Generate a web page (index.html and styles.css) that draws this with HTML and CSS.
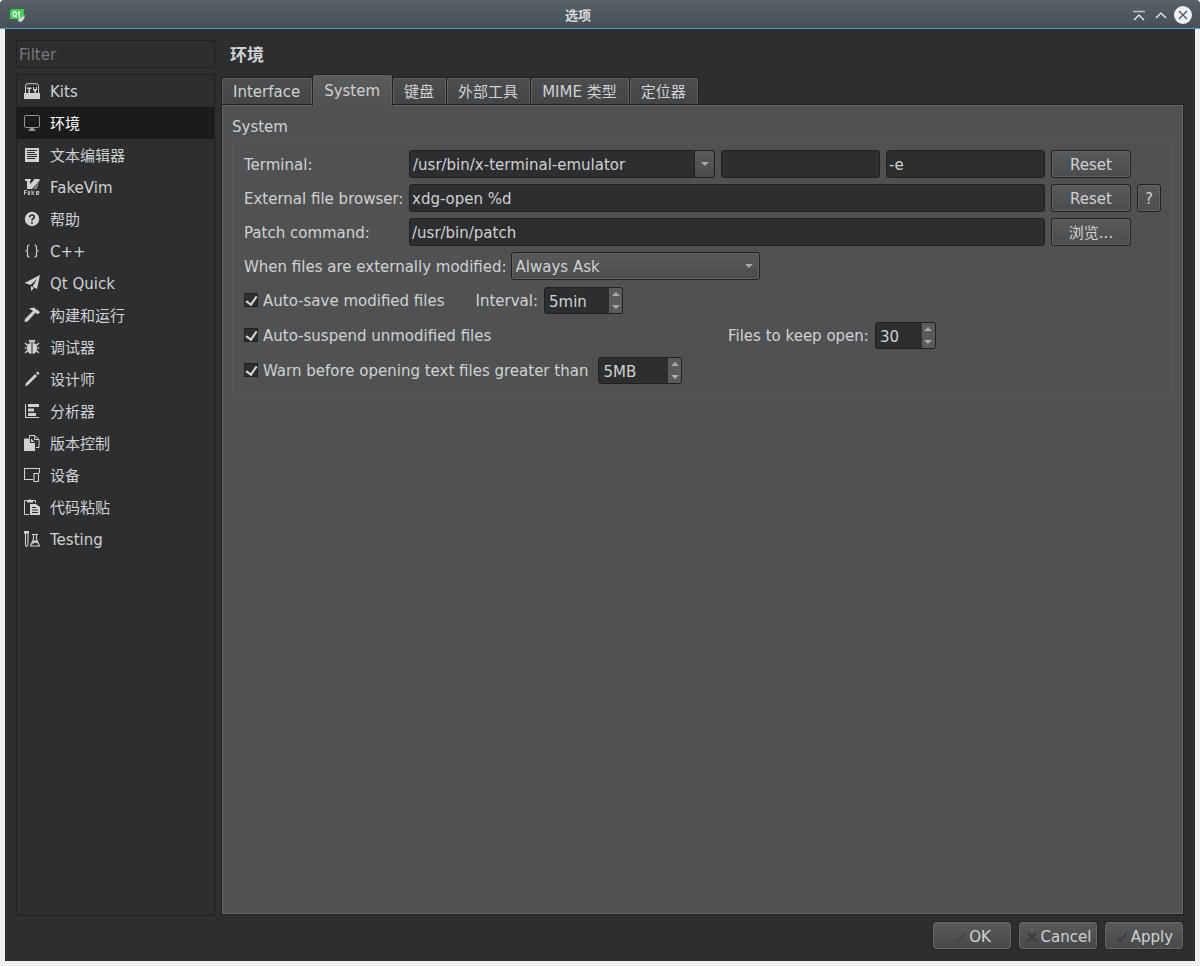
FILE: index.html
```html
<!DOCTYPE html>
<html lang="zh-CN">
<head>
<meta charset="utf-8">
<title>选项</title>
<link rel="stylesheet" href="styles.css">
</head>
<body>
<div class="window">
  <header class="titlebar">
    <svg class="app-icon" viewBox="0 0 16 16" aria-hidden="true">
      <path d="M2 2h12v8l-2 2H0V4z" fill="#41cd52"/>
      <ellipse cx="4.6" cy="7" rx="1.7" ry="2.4" fill="none" stroke="#fff" stroke-width="1.1"/>
      <path d="M5 8.5l1.5 1.5M9 4v4.5q0 1 1.2 .8M7.7 5.6h2.6" fill="none" stroke="#fff" stroke-width="1.1"/>
      <path d="M8 14l1-4 2 1 4-3-1 4-3 3z" fill="#d8dcd8"/>
    </svg>
    <h1 class="title">选项</h1>
    <div class="window-buttons">
      <button class="window-button" type="button" aria-label="Keep above"><svg viewBox="0 0 18 18"><path d="M3 5.5h12" stroke="#b5babe" stroke-width="1.6"/><path d="M4 14l5-5 5 5" fill="none" stroke="#fcfcfc" stroke-width="1.2"/></svg></button>
      <button class="window-button" type="button" aria-label="Maximize"><svg viewBox="0 0 18 18"><path d="M4 12l5-5 5 5" fill="none" stroke="#fcfcfc" stroke-width="1.2"/></svg></button>
      <button class="window-button" type="button" aria-label="Close"><svg viewBox="0 0 18 18"><circle cx="9" cy="9" r="9" fill="#eff0f1"/><path d="M5 5l8 8M13 5l-8 8" stroke="#4b5358" stroke-width="1.2"/></svg></button>
    </div>
  </header>

  <main class="dialog">
    <div class="columns">
      <aside class="sidebar">
        <input class="filter" type="text" placeholder="Filter" aria-label="Filter">
        <nav class="categories" aria-label="Categories">
          <button class="category" type="button"><svg class="icon" viewBox="0 0 16 16"><path d="M0 10h16v6H0z"/><path d="M1.500 10V3.200Q1.500.7 4 .7h8q2.500 0 2.500 2.500V10" fill="none" stroke="currentColor"/><path d="M3 4.500h4.500v1.500H3zM4.500 5h1.500v6H4.500zM9 4h1v2h2V4h1v3l-1.200 1v3h-1.500V8L9 7z"/></svg><span>Kits</span></button>
          <button class="category selected" type="button" aria-current="page"><svg class="icon dim" viewBox="0 0 16 16"><rect x=".5" y=".5" width="15" height="12" rx="1.500" fill="none" stroke="currentColor"/><path d="M6 13h4v1.500h1.500V16h-7v-1.500H6z"/></svg><span>环境</span></button>
          <button class="category" type="button"><svg class="icon" viewBox="0 0 16 16"><path fill-rule="evenodd" d="M1 1h14v14H1zM3 3v1h10V3zM3 5v1h8V5zM3 7v1h10V7zM3 9v1h10V9zM3 11v1h8v-1z"/></svg><span>文本编辑器</span></button>
          <button class="category" type="button"><svg class="icon" viewBox="0 0 16 16"><path d="M1 0h6v1.500H6V5l4-4V0h5l1 1-8 9H3V2H1z"/><path d="M15 2l-6 8h4z" opacity=".5"/><path d="M.5 16v-4.500h2.500M.5 13.500h2M4 12.500h1.500V15.500H4v-1.500h1.500M8 11v5M10.500 12.500l-2 1.500 2 1.500M12.500 14H15v-1.500h-2.500v3H15" fill="none" stroke="currentColor" stroke-width=".9"/></svg><span>FakeVim</span></button>
          <button class="category" type="button"><svg class="icon" viewBox="0 0 16 16"><circle cx="8" cy="8" r="7.200"/><path d="M5.800 6.200Q5.800 4 8 4t2.200 2Q10.200 7.200 9 7.800 8 8.400 8 9.700M8 11v1.700" fill="none" class="cut" stroke-width="1.700"/></svg><span>帮助</span></button>
          <button class="category" type="button"><svg class="icon" viewBox="0 0 16 16"><path d="M5.500 2Q3.500 2 3.500 4v2.500Q3.500 8 1.500 8q2 0 2 1.500V12q0 2 2 2M10.500 2q2 0 2 2v2.500q0 1.500 2 1.500-2 0-2 1.500V12q0 2-2 2" fill="none" stroke="currentColor" stroke-width="1.200"/></svg><span>C++</span></button>
          <button class="category" type="button"><svg class="icon" viewBox="0 0 16 16"><path d="M16 0l-3 14-4.500-2.500L13 4 6.500 10 .5 8z"/><path d="M7 11l3 2-3 3z"/></svg><span>Qt Quick</span></button>
          <button class="category" type="button"><svg class="icon" viewBox="0 0 16 16"><path d="M5 1.500L10 .5l3 2.500 1 .2 2 2-2.500 2.300-1.800-2L3.500 14.500.5 15 1 12 9 4z"/></svg><span>构建和运行</span></button>
          <button class="category" type="button"><svg class="icon" viewBox="0 0 16 16"><path d="M5 3.500Q5 1 8 1t3 2.500z"/><path d="M3.500 5l4-1v11Q3.500 14.500 3 10zM12.500 5l-4-1v11q4-.5 4.500-5z"/><path d="M1 4l3 3M15 4l-3 3M.5 9H4M15.500 9H12M1 14l3-3M15 14l-3-3M5 1l1.500 1.500M11 1L9.500 2.500" stroke="currentColor" stroke-width="1.200"/></svg><span>调试器</span></button>
          <button class="category" type="button"><svg class="icon" viewBox="0 0 16 16"><path d="M11 3l2 2-9 9-3 1.500 1-3.500zM12 2l1.500-1.500q1 0 2 2L14 4z"/></svg><span>设计师</span></button>
          <button class="category" type="button"><svg class="icon" viewBox="0 0 16 16"><path d="M1 1h1v13h13v1H1zM4 1h11v3H4zM4 5.500h6v3H4zM4 10h8v3H4z"/></svg><span>分析器</span></button>
          <button class="category" type="button"><svg class="icon" viewBox="0 0 16 16"><path d="M0 3.500h6V8h5v8H0z"/><path d="M7 3.500L10.500 7H7z"/><path d="M5.500 3V.5h5l4.500 4v8h-3M10.500.5v4H15" fill="none" stroke="currentColor"/></svg><span>版本控制</span></button>
          <button class="category" type="button"><svg class="icon" viewBox="0 0 16 16"><path d="M9 12.500H.5v-11h15V6M10 6.500h4.500v8H10z" fill="none" stroke="currentColor" stroke-width="1.100"/></svg><span>设备</span></button>
          <button class="category" type="button"><svg class="icon" viewBox="0 0 16 16"><path d="M5 15.500H.5v-14h11V4" fill="none" stroke="currentColor"/><path d="M3 1h2l1-1 1 1h2v2.500H3z"/><path fill-rule="evenodd" d="M6 5h6l4 3v8H6zM8 8v1h4V8zM8 10.500v1h6v-1zM8 13v1h6v-1z"/></svg><span>代码粘贴</span></button>
          <button class="category" type="button"><svg class="icon" viewBox="0 0 16 16"><path d="M0 0h5v2.500H0z"/><path d="M1.500 2v11Q1.500 15.500 2.500 15.500t1.500-2.500V2M8 3.500h6M9.500 4v4L6.500 15h9L12.500 8V4" fill="none" stroke="currentColor" stroke-width="1.100"/><path d="M9 9.500h4l1 3-3-1-3 2z"/></svg><span>Testing</span></button>
        </nav>
      </aside>

      <section class="page">
        <h2 class="page-title">环境</h2>
        <div class="tabs" role="tablist">
          <button class="tab" type="button" role="tab">Interface</button>
          <button class="tab active" type="button" role="tab" aria-selected="true">System</button>
          <button class="tab" type="button" role="tab">键盘</button>
          <button class="tab" type="button" role="tab">外部工具</button>
          <button class="tab" type="button" role="tab">MIME 类型</button>
          <button class="tab" type="button" role="tab">定位器</button>
        </div>
        <div class="panel" role="tabpanel">
          <h3 class="group-title">System</h3>
          <div class="group">
            <div class="fields">
              <label for="terminal">Terminal:</label>
              <div class="terminal">
                <div class="combo">
                  <input class="field" id="terminal" type="text" value="/usr/bin/x-terminal-emulator">
                  <button class="combo-button" type="button" aria-label="Show terminals"><svg class="arrow" viewBox="0 0 8 4"><path d="M0 0h8L4 4z"/></svg></button>
                </div>
                <input class="field" type="text" aria-label="Open arguments">
                <input class="field" type="text" value="-e" aria-label="Run arguments">
              </div>
              <button class="button" type="button">Reset</button>
              <span></span>

              <label for="browser">External file browser:</label>
              <input class="field" id="browser" type="text" value="xdg-open %d">
              <button class="button" type="button">Reset</button>
              <button class="button" type="button">?</button>

              <label for="patch">Patch command:</label>
              <input class="field" id="patch" type="text" value="/usr/bin/patch">
              <button class="button" type="button">浏览...</button>
            </div>

            <div class="row tight">
              <label for="modified">When files are externally modified:</label>
              <div class="select-wrap">
                <select class="select" id="modified"><option>Always Ask</option></select>
                <svg class="arrow" viewBox="0 0 8 4"><path d="M0 0h8L4 4z"/></svg>
              </div>
            </div>

            <div class="row spaced">
              <label class="check"><input class="checkbox" type="checkbox" checked>Auto-save modified files</label>
              <label class="after-check" for="interval">Interval:</label>
              <div class="spin">
                <input class="spin-value" id="interval" type="text" value="5min">
                <div class="steps"><button class="step" type="button" aria-label="Increase"><svg class="arrow" viewBox="0 0 8 4"><path d="M0 4h8L4 0z"/></svg></button><button class="step" type="button" aria-label="Decrease"><svg class="arrow" viewBox="0 0 8 4"><path d="M0 0h8L4 4z"/></svg></button></div>
              </div>
            </div>

            <div class="row spaced">
              <label class="check check-column"><input class="checkbox" type="checkbox" checked>Auto-suspend unmodified files</label>
              <label for="keep-open">Files to keep open:</label>
              <div class="spin short">
                <input class="spin-value" id="keep-open" type="text" value="30">
                <div class="steps"><button class="step" type="button" aria-label="Increase"><svg class="arrow" viewBox="0 0 8 4"><path d="M0 4h8L4 0z"/></svg></button><button class="step" type="button" aria-label="Decrease"><svg class="arrow" viewBox="0 0 8 4"><path d="M0 0h8L4 4z"/></svg></button></div>
              </div>
            </div>

            <div class="row spaced">
              <label class="check"><input class="checkbox" type="checkbox" checked>Warn before opening text files greater than</label>
              <div class="spin wide">
                <input class="spin-value" type="text" value="5MB" aria-label="Size limit">
                <div class="steps"><button class="step" type="button" aria-label="Increase"><svg class="arrow" viewBox="0 0 8 4"><path d="M0 4h8L4 0z"/></svg></button><button class="step" type="button" aria-label="Decrease"><svg class="arrow" viewBox="0 0 8 4"><path d="M0 0h8L4 4z"/></svg></button></div>
              </div>
            </div>
          </div>
        </div>
      </section>
    </div>

    <footer class="actions">
      <button class="action" type="button"><svg class="mark faint" viewBox="0 0 14 14"><path d="M2 8l3 3 7-8"/></svg>OK</button>
      <button class="action" type="button"><svg class="mark" viewBox="0 0 14 14"><path d="M3 3l8 8M11 3l-8 8"/></svg>Cancel</button>
      <button class="action" type="button"><svg class="mark" viewBox="0 0 14 14"><path d="M2 8l3 3 7-8"/></svg>Apply</button>
    </footer>
  </main>
</div>
</body>
</html>
```
FILE: styles.css
```css
* {
  box-sizing: border-box;
}

body {
  margin: 0;
  background: #f1f1f3;
  color: #d0d1d2;
  font: 15px/20px "DejaVu Sans", "Noto Sans CJK SC", sans-serif;
}

button,
input,
select {
  margin: 0;
  color: inherit;
  font: inherit;
}

h1,
h2,
h3 {
  margin: 0;
}

.window {
  display: flex;
  flex-direction: column;
  min-height: 100vh;
}

/* Title bar */
.titlebar {
  display: grid;
  grid-template-columns: 1fr auto 1fr;
  align-items: center;
  height: 29px;
  padding: 2px 8px 0;
  background: linear-gradient(#566168, #465056);
  border-bottom: 1px solid #4f9bc4;
  border-radius: 4px 4px 0 0;
}

.app-icon {
  width: 16px;
  height: 16px;
  margin-left: 2px;
}

.title {
  padding: 2px 44px 0 0;
  color: #d9dcde;
  font-size: 13px;
  line-height: 20px;
}

.window-buttons {
  display: flex;
  justify-content: flex-end;
  gap: 4px;
}

.window-button {
  width: 18px;
  height: 18px;
  padding: 0;
  background: none;
  border: 0;
}

.window-button svg {
  display: block;
}

/* Dialog */
.dialog {
  display: flex;
  flex: 1;
  flex-direction: column;
  gap: 8px;
  margin: 0 5px 5px;
  padding: 11px 12px 12px 11px;
  background: #2d2e30;
}

.columns {
  display: flex;
  flex: 1;
  gap: 6px;
}

.sidebar {
  display: flex;
  flex-direction: column;
  gap: 6px;
  width: 199px;
  margin-bottom: -2px;
}

.filter {
  width: 100%;
  height: 28px;
  padding: 2px 2px 0;
  background: #2d2e30;
  border: 1px solid #1f2022;
  border-radius: 2px;
}

.filter::placeholder {
  color: #77787a;
}

.categories {
  flex: 1;
  border: 1px solid #1f2022;
}

.category {
  display: flex;
  align-items: center;
  gap: 10px;
  width: 100%;
  height: 32px;
  padding: 0 7px;
  background: none;
  border: 0;
  text-align: left;
}

.category span {
  padding-top: 2px;
}

.category.selected {
  background: #1b1b1c;
  color: #fff;
}

.icon {
  width: 16px;
  height: 16px;
  flex: none;
  fill: currentColor;
}

.icon.dim {
  color: #909192;
}

.cut {
  stroke: #2d2e30;
}

/* Page */
.page {
  display: flex;
  flex: 1;
  flex-direction: column;
  min-width: 0;
}

.page-title {
  padding: 4px 0 9px 9px;
  font-size: 17px;
  line-height: 22px;
}

.tabs {
  display: flex;
  align-items: flex-end;
  gap: 1px;
  height: 30px;
  padding-left: 1px;
}

.tab {
  height: 27px;
  padding: 0 11px 0 10px;
  background: linear-gradient(#4c4d4f, #434446);
  border: 1px solid #606163;
  border-bottom: 0;
  border-radius: 2px 2px 0 0;
  box-shadow: 0 0 0 1px #1f2022;
}

.tab.active {
  z-index: 1;
  height: 31px;
  margin-bottom: -1px;
  padding-bottom: 1px;
  background: linear-gradient(#5a5b5d, #505153);
  clip-path: inset(-1px -1px 0);
}

.panel {
  flex: 1;
  margin-left: 1px;
  padding: 9px;
  background: #505153;
  border: 1px solid #67686a;
  box-shadow: 0 0 0 1px #1f2022;
}

.group-title {
  font-size: 15px;
  font-weight: 400;
  line-height: 24px;
}

.group {
  display: flex;
  flex-direction: column;
  gap: 6px;
  padding: 10px 11px 11px;
  border: 1px solid #57585a;
  border-radius: 2px;
}

.fields {
  display: grid;
  grid-template-columns: 159px 1fr 80px 24px;
  align-items: center;
  gap: 6px;
  white-space: nowrap;
}

.fields label,
.row.tight label {
  padding-top: 2px;
}

.terminal {
  display: grid;
  grid-template-columns: 306fr 159fr 159fr;
  gap: 6px;
}

.field {
  width: 100%;
  min-width: 0;
  height: 28px;
  padding: 2px 2px 0;
  background: #2d2e30;
  border: 1px solid #1f2022;
  border-radius: 3px;
}

.combo {
  display: flex;
  min-width: 0;
}

.combo .field {
  padding-left: 3px;
  border-radius: 3px 0 0 3px;
}

.combo-button {
  display: grid;
  flex: none;
  place-items: center;
  width: 20px;
  padding: 0;
  background: linear-gradient(#58595b, #4b4c4e);
  border: 1px solid #1f2022;
  border-left: 0;
  border-radius: 0 3px 3px 0;
}

.arrow {
  display: block;
  width: 8px;
  height: 4px;
  fill: #a9aaac;
}

.button {
  height: 28px;
  padding: 2px 0 0;
  background: linear-gradient(#58595b, #4b4c4e);
  border: 1px solid #1f2022;
  border-radius: 3px;
  box-shadow: inset 0 0 0 1px #626365;
}

.row {
  display: flex;
  align-items: center;
  gap: 6px;
}

.row.tight {
  gap: 4px;
}

.row.spaced {
  min-height: 29px;
}

.select-wrap {
  display: grid;
  width: 249px;
  align-items: center;
}

.select {
  grid-area: 1 / 1;
  height: 28px;
  padding: 2px 4px 0;
  appearance: none;
  background: linear-gradient(#58595b, #4b4c4e);
  border: 1px solid #1f2022;
  border-radius: 3px;
  box-shadow: inset 0 0 0 1px #626365;
}

.select-wrap .arrow {
  z-index: 1;
  grid-area: 1 / 1;
  justify-self: end;
  margin-right: 7px;
  pointer-events: none;
}

.check {
  display: flex;
  align-items: center;
  gap: 5px;
}

.check-column {
  width: 478px;
}

.after-check {
  margin-left: 25px;
}

.checkbox {
  display: grid;
  place-items: center;
  width: 14px;
  height: 14px;
  margin-bottom: 2px;
  appearance: none;
  background: #2d2e30;
  border: 1px solid #1f2022;
}

.checkbox:checked::before {
  width: 5px;
  height: 9px;
  margin-bottom: 2px;
  border: solid #d8d9da;
  border-width: 0 2px 2px 0;
  content: "";
  transform: rotate(35deg);
}

.spin {
  display: flex;
  width: 79px;
  height: 27px;
  overflow: hidden;
  background: #2d2e30;
  border: 1px solid #1f2022;
  border-radius: 3px;
}

.spin.short {
  width: 61px;
}

.spin.wide {
  width: 84px;
  margin-left: 4px;
}

.spin-value {
  flex: 1;
  min-width: 0;
  padding: 2px 4px 0;
  background: none;
  border: 0;
}

.steps {
  display: grid;
  width: 13px;
  background: #5a5b5d;
}

.step {
  display: grid;
  place-items: center;
  padding: 0;
  background: none;
  border: 0;
}

/* Dialog buttons */
.actions {
  display: flex;
  justify-content: flex-end;
  gap: 8px;
}

.action {
  display: flex;
  align-items: center;
  justify-content: center;
  gap: 2px;
  width: 78px;
  height: 27px;
  padding: 2px 0 0;
  background: linear-gradient(#58595b, #48494b);
  border: 1px solid #67686a;
  border-radius: 3px;
  box-shadow: 0 0 0 1px #232426;
}

.mark {
  width: 14px;
  height: 14px;
  fill: none;
  stroke: #3a3b3d;
  stroke-width: 2;
}

.mark.faint {
  stroke: #464749;
}
```
